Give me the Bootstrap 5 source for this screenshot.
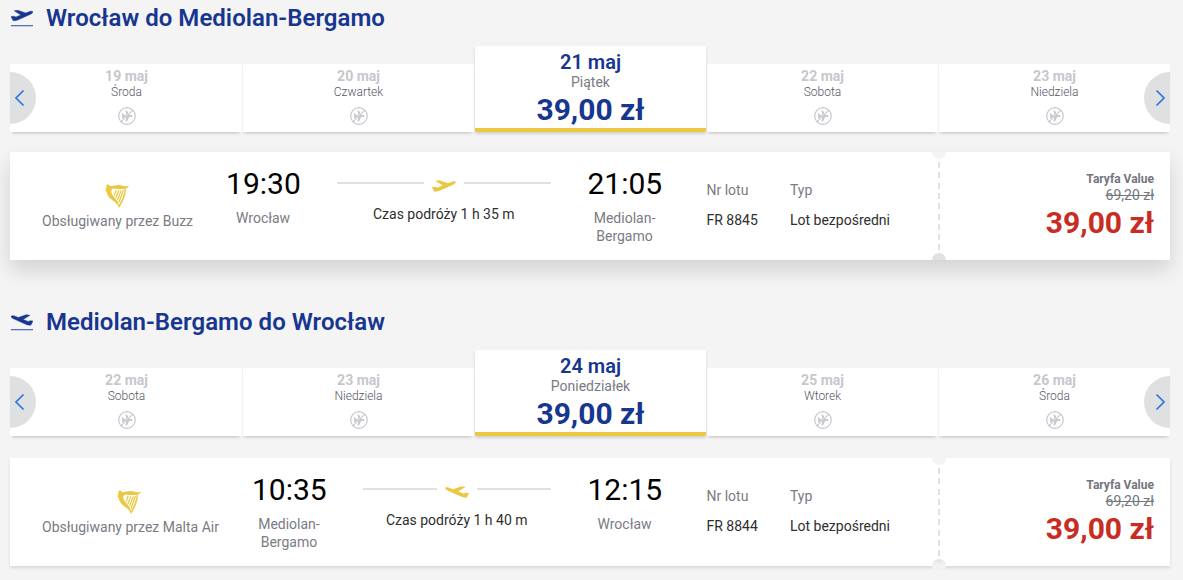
<!DOCTYPE html>
<html lang="pl">

<head>
    <meta charset="UTF-8">
    <meta name="viewport" content="width=device-width, initial-scale=1.0">
    <title>Wybierz lot</title>
    <link href="https://cdn.jsdelivr.net/npm/bootstrap@5.3.0/dist/css/bootstrap.min.css" rel="stylesheet">
    <style>
        body {
            background-color: #f4f4f4;
            font-family: Roboto, "Liberation Sans", sans-serif;
            font-size: 14px;
            line-height: 18px;
            color: #2e2e2e;
            overflow: hidden;
        }

        .flights {
            width: 1160px;
            margin-left: 10px;
        }

        .journey {
            height: 304px;
            padding-top: 2px;
        }

        .journey-title {
            font-size: 24px;
            font-weight: 600;
            line-height: 32px;
            letter-spacing: .03px;
            color: #17368f;
        }

        .journey-title svg {
            margin-left: 1px;
            margin-right: 13px;
        }

        /* Date carousel */
        .dates {
            height: 86px;
            margin-top: 12px;
        }

        .date-item {
            width: 232px;
            height: 68px;
            padding-top: 3px;
            padding-left: 1px;
            background-color: #fff;
            box-shadow: 0 3px 3px -2px rgba(0, 0, 0, .22);
        }

        .date-item + .date-item {
            padding-left: 0;
            border-left: 1px solid #f1f1f1;
        }

        .date-day {
            font-weight: 700;
            color: #c5c8cd;
        }

        .date-name {
            font-size: 12px;
            font-weight: 300;
            line-height: 14px;
            color: #55565f;
        }

        .date-item svg {
            margin-top: 8px;
        }

        .date-item.selected {
            height: 86px;
            padding-top: 4px;
            border-bottom: 4px solid #ecc842;
            border-radius: 2px;
            position: relative;
            z-index: 1;
            border-left: 0;
            width: 231px;
            margin-left: 1px;
            box-shadow: 0 2px 3px rgba(0, 0, 0, .14);
        }

        .selected .date-day {
            font-size: 20px;
            font-weight: 600;
            line-height: 24px;
            color: #17368f;
        }

        .selected .date-name {
            font-size: 14px;
            font-weight: 400;
            line-height: 16px;
            color: #7a7b83;
        }

        .selected .date-price {
            font-size: 30px;
            font-weight: 700;
            line-height: 40px;
            color: #17368f;
        }

        .arrow {
            width: 26px;
            height: 52px;
            top: 26px;
            background-color: #dfe0e2;
            z-index: 2;
        }

        .arrow-prev {
            left: 0;
            border-radius: 0 26px 26px 0;
        }

        .arrow-next {
            right: 0;
            border-radius: 26px 0 0 26px;
        }

        /* Flight card */
        .flight {
            height: 108px;
            margin-top: 22px;
            background-color: #fff;
            box-shadow: 0 2px 3px rgba(0, 0, 0, .12);
        }

        .flight.raised {
            margin-top: 20px;
            box-shadow: 0 10px 20px rgba(0, 0, 0, .14);
        }

        .flight-main {
            width: 929px;
            padding-left: 32px;
        }

        .carrier {
            padding-top: 32px;
            margin-right: 33px;
            color: #7a7b83;
        }

        .carrier svg {
            margin-bottom: 2px;
        }

        .stop {
            width: 74px;
            padding-top: 13px;
            color: #7a7b83;
        }

        .stop-time {
            font-size: 30px;
            line-height: 37px;
            color: #000;
            margin-bottom: 7px;
        }

        .duration {
            margin: 0 37px;
            padding-top: 25px;
        }

        .duration-line {
            height: 2px;
            background-color: #e1e1e1;
        }

        .duration-row {
            height: 12px;
            margin-bottom: 16px;
        }

        .info {
            padding-top: 29px;
            color: #7a7b83;
        }

        .info-number {
            width: 83.5px;
            margin-left: 45px;
        }

        .info-type {
            width: 149px;
        }

        .info-value {
            margin-top: 12px;
            color: #2e2e2e;
        }

        .fare {
            padding: 18px 16px 0 0;
        }

        .fare-name {
            font-size: 12px;
            font-weight: 700;
            color: #74757e;
        }

        .fare-old {
            line-height: 15px;
            color: #74757e;
        }

        .fare-price {
            font-size: 30px;
            font-weight: 700;
            line-height: 40px;
            color: #c92c22;
        }

        /* Perforated ticket edge */
        .tear {
            width: 2px;
            top: 10px;
            bottom: 8px;
            left: 928px;
            background: repeating-linear-gradient(#e1e1e1 0 6px, #fff 6px 10.3px);
        }

        .notch {
            width: 14px;
            height: 7px;
            left: 922px;
        }

        .notch-top {
            top: 0;
            background-color: #f4f4f4;
            border-radius: 0 0 7px 7px;
        }

        .notch-bottom {
            height: 10px;
            bottom: -3px;
            background: linear-gradient(#e2e2e2, #f2f2f2 6px);
            border-radius: 7px 7px 0 0;
        }

        .raised .notch-bottom {
            height: 7px;
            bottom: 0;
            background: #e1e1e1;
        }
    </style>
</head>

<body>
    <!-- Icons -->
    <svg class="d-none">
        <symbol id="plane" viewBox="0 0 24 12">
            <path d="M0 7.2 2.8 6.7 5.4 7.6 10.8 5.5 3.4 .9 7.3 .2 16 3.2 20.5 1.6C22 1.1 23.7 1.2 23.9 2.1 24 3.2 22 4.4 20 5.3L8 10.6C6 11.5 3.5 12 2.2 11.4Z" />
        </symbol>
        <symbol id="harp" viewBox="0 0 24 24">
            <path d="M1.4 1.3C2.2-.1 4.4.3 4.500 1.700 8 3 11 .3 15.500 1.300 18 2 21 2.500 24 2.100 23.300 3.400 22.300 4 21 4.300 20.900 11 18 18.500 14 24 12.500 19 8.500 17.600 5.200 14.500 2.800 12.200 1.900 9.700 1.700 7.900L.2 6.500 1.300 6 0 4.500 1.400 4.300ZM7.200 5C5.900 6.500 5.800 8.600 7.500 11 9.700 14 13 16.500 14 21 17.300 15 19.200 9.500 19.700 4.700 14.500 5.900 10.500 4 7.200 5Z" fill-rule="evenodd" />
            <path d="M11.200 6 9 11.700M13.800 6.500 10.900 14M16.200 6.500 12.600 16M18.400 6 14 18.500" fill="none" stroke="currentColor" stroke-width="1.200" />
        </symbol>
        <symbol id="no-flight" viewBox="0 0 18 18">
            <circle cx="9" cy="9" r="8.300" fill="none" stroke="currentColor" stroke-width="1.200" />
            <path d="M3.700 6.300H4.700L6.200 8H8.500L7.400 3.600H8.900L11.300 8H13.200Q14.500 8.200 14.500 9 14.500 9.800 13.200 10H11.300L8.900 14.400H7.400L8.500 10H6.200L4.700 11.700H3.700L4.400 9Z" />
            <path d="M4 13 13.700 3.300" stroke="#fff" stroke-width=".8" />
            <path d="M3.100 14.900 14.900 3.100" stroke="currentColor" stroke-width="1.200" />
        </symbol>
    </svg>

    <main class="flights">
        <!-- Outbound -->
        <section class="journey">
            <h2 class="journey-title d-flex align-items-center mb-0">
                <svg width="22" height="18" fill="#17368f">
                    <use href="#plane" y=".5" width="22" height="12" stroke="#17368f" stroke-width=".5" />
                    <path d="M0 16h22v1.300H0z" fill="#5572b8" />
                </svg>
                Wrocław do Mediolan-Bergamo
            </h2>
            <div class="dates d-flex align-items-end text-center position-relative">
                <div class="date-item">
                    <div class="date-day">19 maj</div>
                    <div class="date-name">Środa</div>
                    <svg class="d-block mx-auto" width="18" height="18" fill="#c5c8cd" color="#c5c8cd"><use href="#no-flight" /></svg>
                </div>
                <div class="date-item">
                    <div class="date-day">20 maj</div>
                    <div class="date-name">Czwartek</div>
                    <svg class="d-block mx-auto" width="18" height="18" fill="#c5c8cd" color="#c5c8cd"><use href="#no-flight" /></svg>
                </div>
                <div class="date-item selected">
                    <div class="date-day">21 maj</div>
                    <div class="date-name">Piątek</div>
                    <div class="date-price">39,00 zł</div>
                </div>
                <div class="date-item">
                    <div class="date-day">22 maj</div>
                    <div class="date-name">Sobota</div>
                    <svg class="d-block mx-auto" width="18" height="18" fill="#c5c8cd" color="#c5c8cd"><use href="#no-flight" /></svg>
                </div>
                <div class="date-item">
                    <div class="date-day">23 maj</div>
                    <div class="date-name">Niedziela</div>
                    <svg class="d-block mx-auto" width="18" height="18" fill="#c5c8cd" color="#c5c8cd"><use href="#no-flight" /></svg>
                </div>
                <div class="arrow arrow-prev position-absolute">
                    <svg class="d-block" width="26" height="52" fill="none" stroke="#2f76dc" stroke-width="1.700"><path d="M13.500 18.500 6 26l7.500 7.500" /></svg>
                </div>
                <div class="arrow arrow-next position-absolute">
                    <svg class="d-block" width="26" height="52" fill="none" stroke="#2f76dc" stroke-width="1.700"><path d="M12.500 18.500 20 26l-7.500 7.500" /></svg>
                </div>
            </div>

            <div class="flight raised d-flex position-relative">
                <div class="flight-main d-flex">
                    <div class="carrier text-center">
                        <svg class="d-block mx-auto" width="26" height="26" fill="#ecc842" color="#ecc842"><use href="#harp" width="24" height="24" /></svg>
                        Obsługiwany przez Buzz
                    </div>
                    <div class="stop text-center">
                        <div class="stop-time">19:30</div>
                        Wrocław
                    </div>
                    <div class="duration flex-grow-1 text-center">
                        <div class="duration-row d-flex align-items-center gap-2">
                            <div class="duration-line flex-grow-1"></div>
                            <svg width="24" height="12" fill="#ecc842" overflow="visible"><use href="#plane" y="3" width="24" height="12" /></svg>
                            <div class="duration-line flex-grow-1"></div>
                        </div>
                        Czas podróży 1 h 35 m
                    </div>
                    <div class="stop text-center">
                        <div class="stop-time">21:05</div>
                        Mediolan-Bergamo
                    </div>
                    <div class="info info-number">
                        <div>Nr lotu</div>
                        <div class="info-value">FR 8845</div>
                    </div>
                    <div class="info info-type">
                        <div>Typ</div>
                        <div class="info-value">Lot bezpośredni</div>
                    </div>
                </div>
                <div class="fare flex-grow-1 text-end">
                    <div class="fare-name">Taryfa Value</div>
                    <div class="fare-old text-decoration-line-through">69,20 zł</div>
                    <div class="fare-price">39,00 zł</div>
                </div>
                <div class="tear position-absolute"></div>
                <div class="notch notch-top position-absolute"></div>
                <div class="notch notch-bottom position-absolute"></div>
            </div>
        </section>

        <!-- Return -->
        <section class="journey">
            <h2 class="journey-title d-flex align-items-center mb-0">
                <svg width="22" height="18" fill="#17368f">
                    <use href="#plane" width="22" height="12" stroke="#17368f" stroke-width=".5" transform="matrix(-1 0 0 1 22 1)" />
                    <path d="M0 16h22v1.300H0z" fill="#5572b8" />
                </svg>
                Mediolan-Bergamo do Wrocław
            </h2>
            <div class="dates d-flex align-items-end text-center position-relative">
                <div class="date-item">
                    <div class="date-day">22 maj</div>
                    <div class="date-name">Sobota</div>
                    <svg class="d-block mx-auto" width="18" height="18" fill="#c5c8cd" color="#c5c8cd"><use href="#no-flight" /></svg>
                </div>
                <div class="date-item">
                    <div class="date-day">23 maj</div>
                    <div class="date-name">Niedziela</div>
                    <svg class="d-block mx-auto" width="18" height="18" fill="#c5c8cd" color="#c5c8cd"><use href="#no-flight" /></svg>
                </div>
                <div class="date-item selected">
                    <div class="date-day">24 maj</div>
                    <div class="date-name">Poniedziałek</div>
                    <div class="date-price">39,00 zł</div>
                </div>
                <div class="date-item">
                    <div class="date-day">25 maj</div>
                    <div class="date-name">Wtorek</div>
                    <svg class="d-block mx-auto" width="18" height="18" fill="#c5c8cd" color="#c5c8cd"><use href="#no-flight" /></svg>
                </div>
                <div class="date-item">
                    <div class="date-day">26 maj</div>
                    <div class="date-name">Środa</div>
                    <svg class="d-block mx-auto" width="18" height="18" fill="#c5c8cd" color="#c5c8cd"><use href="#no-flight" /></svg>
                </div>
                <div class="arrow arrow-prev position-absolute">
                    <svg class="d-block" width="26" height="52" fill="none" stroke="#2f76dc" stroke-width="1.700"><path d="M13.500 18.500 6 26l7.500 7.500" /></svg>
                </div>
                <div class="arrow arrow-next position-absolute">
                    <svg class="d-block" width="26" height="52" fill="none" stroke="#2f76dc" stroke-width="1.700"><path d="M12.500 18.500 20 26l-7.500 7.500" /></svg>
                </div>
            </div>

            <div class="flight d-flex position-relative">
                <div class="flight-main d-flex">
                    <div class="carrier text-center">
                        <svg class="d-block mx-auto" width="26" height="26" fill="#ecc842" color="#ecc842"><use href="#harp" width="24" height="24" /></svg>
                        Obsługiwany przez Malta Air
                    </div>
                    <div class="stop text-center">
                        <div class="stop-time">10:35</div>
                        Mediolan-Bergamo
                    </div>
                    <div class="duration flex-grow-1 text-center">
                        <div class="duration-row d-flex align-items-center gap-2">
                            <div class="duration-line flex-grow-1"></div>
                            <svg width="24" height="12" fill="#ecc842" overflow="visible"><use href="#plane" width="24" height="12" transform="matrix(-1 0 0 1 24 3)" /></svg>
                            <div class="duration-line flex-grow-1"></div>
                        </div>
                        Czas podróży 1 h 40 m
                    </div>
                    <div class="stop text-center">
                        <div class="stop-time">12:15</div>
                        Wrocław
                    </div>
                    <div class="info info-number">
                        <div>Nr lotu</div>
                        <div class="info-value">FR 8844</div>
                    </div>
                    <div class="info info-type">
                        <div>Typ</div>
                        <div class="info-value">Lot bezpośredni</div>
                    </div>
                </div>
                <div class="fare flex-grow-1 text-end">
                    <div class="fare-name">Taryfa Value</div>
                    <div class="fare-old text-decoration-line-through">69,20 zł</div>
                    <div class="fare-price">39,00 zł</div>
                </div>
                <div class="tear position-absolute"></div>
                <div class="notch notch-top position-absolute"></div>
                <div class="notch notch-bottom position-absolute"></div>
            </div>
        </section>
    </main>

    <script src="https://cdn.jsdelivr.net/npm/bootstrap@5.3.0/dist/js/bootstrap.bundle.min.js"></script>
</body>

</html>
